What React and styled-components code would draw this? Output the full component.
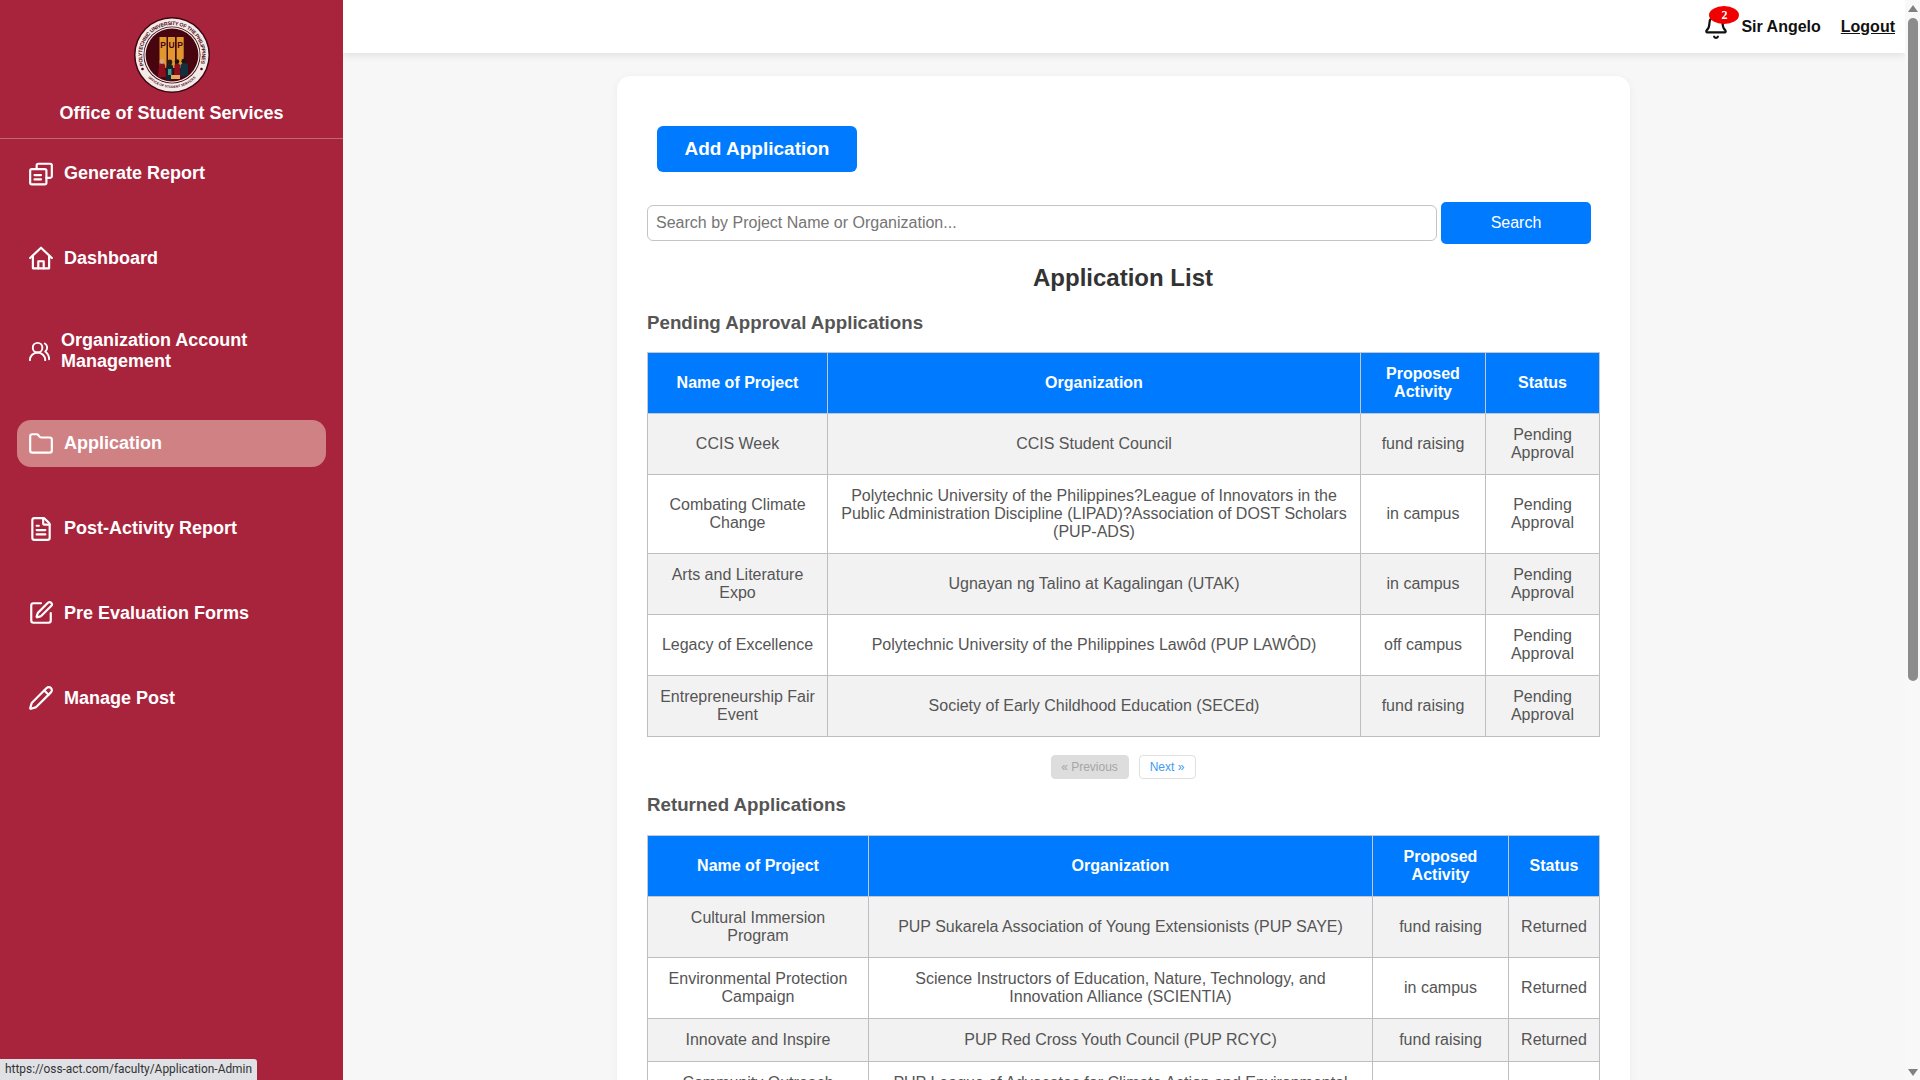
import React from 'react';
import styled, { createGlobalStyle } from 'styled-components';
import { Bell, UsersRound, Folder, FileText, SquarePen, Pencil } from 'lucide-react';

const GlobalStyle = createGlobalStyle`
  html, body {
    margin: 0;
    height: 100%;
    overflow: hidden;
    font-family: "Liberation Sans", Arial, sans-serif;
    background: #f7f7f7;
  }
`;

const Page = styled.div`
  display: flex;
  height: 100vh;
  overflow: hidden;
`;

const Sidebar = styled.aside`
  flex: 0 0 343px;
  display: flex;
  flex-direction: column;
  background: #a8243d;
  color: #fff;
`;

const Brand = styled.div`
  display: flex;
  flex-direction: column;
  align-items: center;
  padding: 17px 0 14px;
  border-bottom: 1px solid rgba(255, 255, 255, 0.3);
`;

const BrandName = styled.div`
  margin-top: 10px;
  font-size: 18px;
  line-height: 21px;
  font-weight: 700;
`;

const Nav = styled.nav`
  display: flex;
  flex-direction: column;
  gap: 37.8px;
  padding: 11px 17px 0;
`;

const NavItem = styled.a`
  display: flex;
  align-items: center;
  gap: 10px;
  padding: 10.5px 11px;
  border-radius: 14px;
  font-size: 18px;
  line-height: 21px;
  font-weight: 700;
  color: #fff;
  background: ${({ $active }) => ($active ? '#d08184' : 'transparent')};
`;

const NavIcon = styled.span`
  flex: 0 1 26px;
  min-width: 23px;
  display: flex;
  align-items: center;

  svg {
    width: 100%;
    height: auto;
  }
`;

const Main = styled.div`
  flex: 1;
  min-width: 0;
  display: flex;
  flex-direction: column;
  overflow: hidden;
`;

const TopBar = styled.header`
  position: relative;
  z-index: 1;
  flex: 0 0 53px;
  display: flex;
  align-items: center;
  justify-content: flex-end;
  padding-right: 10px;
  background: #fff;
  box-shadow: 0 2px 8px rgba(0, 0, 0, 0.1);
  font-size: 16px;
  font-weight: 700;
  color: #111;
`;

const BellBox = styled.div`
  position: relative;
  display: flex;
  margin-right: 12px;
  color: #111;
`;

const Badge = styled.span`
  position: absolute;
  top: -8px;
  left: 6px;
  width: 30px;
  height: 18px;
  border-radius: 50%;
  background: #f00000;
  color: #fff;
  font-family: "Liberation Serif", serif;
  font-size: 12px;
  font-weight: 700;
  line-height: 18px;
  text-align: center;
`;

const Logout = styled.a`
  margin-left: 20px;
  color: #111;
  text-decoration: underline;
`;

const Content = styled.main`
  flex: 1;
  overflow: hidden;
  padding: 23px 1px 0 0;
`;

const Card = styled.section`
  box-sizing: border-box;
  width: 1013px;
  margin: 0 auto;
  padding: 50px 31px 40px 30px;
  background: #fff;
  border-radius: 14px;
  box-shadow: 0 2px 10px rgba(0, 0, 0, 0.05);
`;

const AddButton = styled.button`
  display: block;
  width: 200px;
  height: 46px;
  margin: 0 0 30px 10px;
  border: 0;
  border-radius: 6px;
  background: #007bff;
  color: #fff;
  font: 700 19px "Liberation Sans", Arial, sans-serif;
`;

const SearchRow = styled.form`
  display: flex;
  align-items: center;
  gap: 4px;
  margin-right: 8px;
`;

const SearchInput = styled.input`
  flex: 1;
  min-width: 0;
  box-sizing: border-box;
  height: 36px;
  padding: 0 8px;
  border: 1px solid #c4c4c4;
  border-radius: 6px;
  font: 16px "Liberation Sans", Arial, sans-serif;

  &::placeholder {
    color: #757575;
  }
`;

const SearchButton = styled.button`
  flex: 0 0 150px;
  height: 42px;
  border: 0;
  border-radius: 5px;
  background: #007bff;
  color: #fff;
  font: 16px "Liberation Sans", Arial, sans-serif;
`;

const Title = styled.h2`
  margin: 20px 0 21px;
  font-size: 24px;
  line-height: 27px;
  font-weight: 700;
  color: #333;
  text-align: center;
`;

const SectionTitle = styled.h3`
  margin: 0 0 ${({ $gap }) => $gap}px;
  font-size: 18.72px;
  line-height: 22px;
  font-weight: 700;
  color: #555;
`;

const Table = styled.table`
  width: 952px;
  table-layout: fixed;
  border-collapse: collapse;
  font-size: 16px;
  line-height: 18px;
`;

const Col = styled.col`
  width: ${({ $width }) => $width}px;
`;

const HeadCell = styled.th`
  padding: 12px 10px;
  border: 1px solid #c4c8cc;
  background: #007bff;
  color: #fff;
  font-weight: 700;
`;

const Row = styled.tr`
  background: ${({ $odd }) => ($odd ? '#f2f2f2' : '#fff')};
`;

const Cell = styled.td`
  padding: 12px 10px;
  border: 1px solid #bcbfc2;
  color: #555;
  text-align: center;
`;

const Pager = styled.div`
  display: flex;
  justify-content: center;
  gap: 10px;
  margin: 18px 0 15px;
`;

const PageButton = styled.a`
  box-sizing: border-box;
  width: ${({ $width }) => $width}px;
  height: 24px;
  border: 1px solid ${({ $disabled }) => ($disabled ? '#ddd' : '#e0e0e0')};
  border-radius: 4px;
  background: ${({ $disabled }) => ($disabled ? '#ddd' : '#fff')};
  color: ${({ $disabled }) => ($disabled ? '#a6a6a6' : '#3d9bf5')};
  font-size: 12px;
  line-height: 22px;
  text-align: center;
`;

const ScrollTrack = styled.div`
  flex: 0 0 15px;
  display: flex;
  flex-direction: column;
  align-items: center;
  padding: 5px 2px 4px 3px;
  box-sizing: border-box;
  background: #f8f8f8;
`;

const ScrollArrow = styled.div`
  width: 0;
  height: 0;
  border-left: 5px solid transparent;
  border-right: 5px solid transparent;
  ${({ $down }) => ($down ? 'border-top' : 'border-bottom')}: 7px solid #808080;
`;

const ScrollThumb = styled.div`
  width: 10px;
  height: 663px;
  margin: 6px 0 auto;
  border-radius: 5px;
  background: #8c8c8c;
`;

const StatusTip = styled.div`
  position: absolute;
  left: 0;
  bottom: 0;
  z-index: 2;
  height: 21px;
  padding: 0 5px;
  border-top-right-radius: 3px;
  background: #dfe1e5;
  color: #333;
  font-family: Roboto, "Liberation Sans", sans-serif;
  font-size: 11.9px;
  line-height: 21px;
`;

const Logo = () => (
  <svg width="76" height="76" viewBox="0 0 76 76">
    <defs>
      <path id="ringTop" d="M9.8 48.3 A30 30 0 1 1 66.2 48.3" fill="none" />
      <path id="ringBottom" d="M14.7 61.3 A33 33 0 0 0 61.3 61.3" fill="none" />
    </defs>
    <circle cx="38" cy="38" r="38" fill="#3e0611" />
    <circle cx="38" cy="38" r="36.5" fill="#f4ebe8" />
    <circle cx="38" cy="38" r="28.5" fill="#3e0611" />
    <circle cx="38" cy="38" r="27.7" fill="#f4ebe8" />
    <circle cx="38" cy="38" r="26.4" fill="#47050f" />
    <text fontFamily="Liberation Sans" fontSize="5.2" fontWeight="700" fill="#4a0a16">
      <textPath href="#ringTop" textLength="113">POLYTECHNIC UNIVERSITY OF THE PHILIPPINES</textPath>
    </text>
    <text fontFamily="Liberation Sans" fontSize="3.4" fontWeight="700" fill="#4a0a16" textAnchor="middle">
      <textPath href="#ringBottom" startOffset="50%">OFFICE OF STUDENT SERVICES</textPath>
    </text>
    <circle cx="8.5" cy="52" r="1.3" fill="#4a0a16" />
    <circle cx="67.5" cy="52" r="1.3" fill="#4a0a16" />
    <rect x="25.5" y="20" width="7" height="31" fill="#e0982e" />
    <rect x="34" y="20" width="7" height="31" fill="#e0982e" />
    <rect x="42.7" y="20" width="7" height="31" fill="#e0982e" />
    <g fontFamily="Liberation Sans" fontSize="8.5" fontWeight="700" fill="#47050f" textAnchor="middle">
      <text x="29" y="31">P</text>
      <text x="37.5" y="31">U</text>
      <text x="46.2" y="31">P</text>
    </g>
    <path d="M24 60 L25 48 Q28 43 31 48 L32 60 Z" fill="#8a1020" />
    <circle cx="28" cy="44.5" r="2.4" fill="#d9a27e" />
    <path d="M32 63 L32.5 49 Q36 44 39 49 L39 63 Z" fill="#12242e" />
    <rect x="34" y="52" width="3.5" height="6" fill="#3f9a8a" />
    <circle cx="35.8" cy="45" r="2.5" fill="#2a1a14" />
    <path d="M40 60 L40.5 48 Q43 44 46 48 L46 60 Z" fill="#8a1020" />
    <circle cx="43" cy="44.5" r="2.3" fill="#1c1412" />
    <path d="M46 60 L46.5 48 Q50 43 54 48 L54 58 Z" fill="#13303f" />
    <circle cx="49.8" cy="44.2" r="2.4" fill="#1c1412" />
    <rect x="37" y="58" width="9" height="4" fill="#e8a85a" />
  </svg>
);

const ReportIcon = () => (
  <svg viewBox="0 0 24 24" fill="none" stroke="currentColor" strokeWidth="2" strokeLinecap="round" strokeLinejoin="round">
    <path d="M8 7V4a1.5 1.5 0 0 1 1.5-1.5h11A1.5 1.5 0 0 1 22 4v10a1.5 1.5 0 0 1-1.5 1.5H17" />
    <rect x="2" y="7.5" width="15" height="14" rx="1.5" />
    <path d="M6 13h6M6 17h6" />
  </svg>
);

const HomeIcon = () => (
  <svg viewBox="0 0 24 24" fill="none" stroke="currentColor" strokeWidth="2" strokeLinecap="round" strokeLinejoin="round">
    <path d="M2 12 12 2.5 22 12" />
    <path d="M4.5 10v11.5h15V10" />
    <path d="M9.5 21.5V15h5v6.5" />
  </svg>
);

const navItems = [
  { label: 'Generate Report', icon: <ReportIcon /> },
  { label: 'Dashboard', icon: <HomeIcon /> },
  { label: 'Organization Account Management', icon: <UsersRound /> },
  { label: 'Application', icon: <Folder />, active: true },
  { label: 'Post-Activity Report', icon: <FileText /> },
  { label: 'Pre Evaluation Forms', icon: <SquarePen /> },
  { label: 'Manage Post', icon: <Pencil /> },
];

const pending = [
  ['CCIS Week', 'CCIS Student Council', 'fund raising', 'Pending Approval'],
  [
    'Combating Climate Change',
    'Polytechnic University of the Philippines?League of Innovators in the Public Administration Discipline (LIPAD)?Association of DOST Scholars (PUP-ADS)',
    'in campus',
    'Pending Approval',
  ],
  ['Arts and Literature Expo', 'Ugnayan ng Talino at Kagalingan (UTAK)', 'in campus', 'Pending Approval'],
  ['Legacy of Excellence', 'Polytechnic University of the Philippines Lawôd (PUP LAWÔD)', 'off campus', 'Pending Approval'],
  ['Entrepreneurship Fair Event', 'Society of Early Childhood Education (SECEd)', 'fund raising', 'Pending Approval'],
];

const returned = [
  ['Cultural Immersion Program', 'PUP Sukarela Association of Young Extensionists (PUP SAYE)', 'fund raising', 'Returned'],
  [
    'Environmental Protection Campaign',
    'Science Instructors of Education, Nature, Technology, and Innovation Alliance (SCIENTIA)',
    'in campus',
    'Returned',
  ],
  ['Innovate and Inspire', 'PUP Red Cross Youth Council (PUP RCYC)', 'fund raising', 'Returned'],
  ['Community Outreach Program', 'PUP League of Advocates for Climate Action and Environmental Advocacy', 'in campus', 'Returned'],
];

const heads = ['Name of Project', 'Organization', 'Proposed Activity', 'Status'];

const AppTable = ({ columns, rows }) => (
  <Table>
    <colgroup>
      {columns.map((width, i) => (
        <Col key={i} $width={width} />
      ))}
    </colgroup>
    <thead>
      <tr>
        {heads.map((head) => (
          <HeadCell key={head}>{head}</HeadCell>
        ))}
      </tr>
    </thead>
    <tbody>
      {rows.map((row, i) => (
        <Row key={row[0]} $odd={i % 2 === 0}>
          {row.map((value, j) => (
            <Cell key={j}>{value}</Cell>
          ))}
        </Row>
      ))}
    </tbody>
  </Table>
);

const App = () => (
  <Page>
    <GlobalStyle />
    <Sidebar>
      <Brand>
        <Logo />
        <BrandName>Office of Student Services</BrandName>
      </Brand>
      <Nav>
        {navItems.map(({ label, icon, active }) => (
          <NavItem key={label} $active={active}>
            <NavIcon>{icon}</NavIcon>
            <span>{label}</span>
          </NavItem>
        ))}
      </Nav>
    </Sidebar>
    <Main>
      <TopBar>
        <BellBox>
          <Bell size={26} strokeWidth={2} />
          <Badge>2</Badge>
        </BellBox>
        <span>Sir Angelo</span>
        <Logout>Logout</Logout>
      </TopBar>
      <Content>
        <Card>
          <AddButton type="button">Add Application</AddButton>
          <SearchRow>
            <SearchInput placeholder="Search by Project Name or Organization..." />
            <SearchButton type="button">Search</SearchButton>
          </SearchRow>
          <Title>Application List</Title>
          <SectionTitle $gap={18}>Pending Approval Applications</SectionTitle>
          <AppTable columns={[180, 533, 125, 114]} rows={pending} />
          <Pager>
            <PageButton $disabled $width={78}>« Previous</PageButton>
            <PageButton $width={57}>Next »</PageButton>
          </Pager>
          <SectionTitle $gap={19}>Returned Applications</SectionTitle>
          <AppTable columns={[221, 504, 136, 91]} rows={returned} />
        </Card>
      </Content>
    </Main>
    <ScrollTrack>
      <ScrollArrow />
      <ScrollThumb />
      <ScrollArrow $down />
    </ScrollTrack>
    <StatusTip>https://oss-act.com/faculty/Application-Admin</StatusTip>
  </Page>
);

export default App;
